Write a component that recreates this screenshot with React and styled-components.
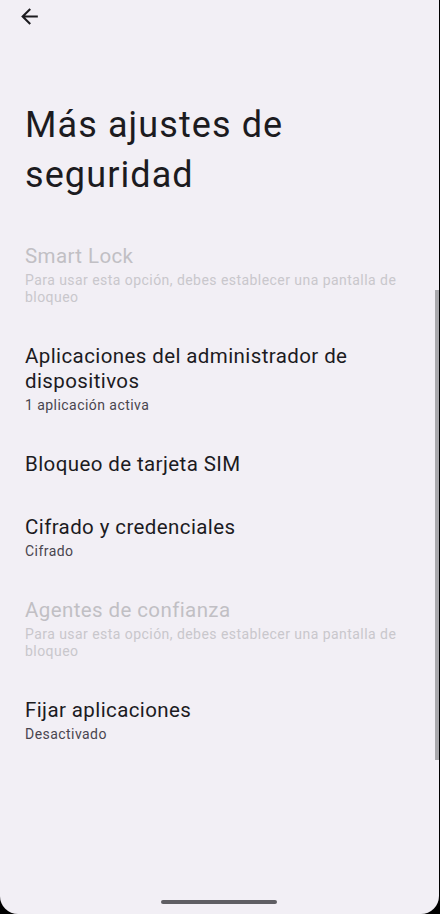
import React from 'react';
import styled, { createGlobalStyle } from 'styled-components';

const GlobalStyle = createGlobalStyle`
  html, body {
    margin: 0;
    padding: 0;
    background: #000;
  }
  body {
    font-family: Roboto, "Noto Sans", sans-serif;
  }
`

const items = [
  {
    title: "Smart Lock",
    summary: "Para usar esta opción, debes establecer una pantalla de bloqueo",
    disabled: true
  },
  {
    title: "Aplicaciones del administrador de dispositivos",
    summary: "1 aplicación activa"
  },
  { title: "Bloqueo de tarjeta SIM" },
  { title: "Cifrado y credenciales", summary: "Cifrado" },
  {
    title: "Agentes de confianza",
    summary: "Para usar esta opción, debes establecer una pantalla de bloqueo",
    disabled: true
  },
  { title: "Fijar aplicaciones", summary: "Desactivado" }
];

const Screen = styled.div`
  position: relative;
  width: 439px;
  height: 914px;
  background: #f2eff5;
  border-radius: 0 0 18px 18px;
  overflow: hidden;
  display: flex;
  flex-direction: column;
`

const Toolbar = styled.div`
  display: flex;
  align-items: center;
  height: 32px;
  padding-left: 17px;
`

const BackButton = styled.button`
  display: flex;
  padding: 0;
  border: none;
  background: none;
  color: #1c1b1f;
  cursor: pointer;
`

const Title = styled.h1`
  margin: 68px 0 0;
  padding: 0 25px;
  font-size: 36px;
  line-height: 50px;
  font-weight: 400;
  letter-spacing: 1.1px;
  color: #1c1b1f;
`

const List = styled.div`
  display: flex;
  flex-direction: column;
  padding-top: 25px;
  padding-right: 10px;
`

const Item = styled.div`
  display: flex;
  flex-direction: column;
  padding: 19px 25px;
  cursor: ${props => props.disabled ? "default" : "pointer"};
`

const ItemTitle = styled.div`
  font-size: 20.5px;
  line-height: 25px;
  letter-spacing: 0.4px;
  color: ${props => props.disabled ? "#c1bfc4" : "#1c1b1f"};
`

const Summary = styled.div`
  margin-top: 3px;
  font-size: 14px;
  line-height: 17px;
  letter-spacing: 0.45px;
  color: ${props => props.disabled ? "#c9c7cc" : "#49454f"};
`

const Scrollbar = styled.div`
  position: absolute;
  right: 0;
  top: 290px;
  width: 4px;
  height: 470px;
  background: #a9a8ac;
`

const HomeBar = styled.div`
  position: absolute;
  left: 161px;
  bottom: 10px;
  width: 116px;
  height: 4px;
  border-radius: 2px;
  background: #5f5e63;
`

const ArrowBack = () => (
  <svg width="25" height="25" viewBox="0 0 24 24" fill="currentColor">
    <path d="M20 11H7.83l5.59-5.59L12 4l-8 8 8 8 1.41-1.41L7.83 13H20v-2z" />
  </svg>
)

const App = () => {
  return (
    <>
      <GlobalStyle />
      <Screen>
        <Toolbar>
          <BackButton aria-label="Atrás">
            <ArrowBack />
          </BackButton>
        </Toolbar>
        <Title>Más ajustes de seguridad</Title>
        <List>
          {items.map(item => (
            <Item key={item.title} disabled={item.disabled}>
              <ItemTitle disabled={item.disabled}>{item.title}</ItemTitle>
              {item.summary && (
                <Summary disabled={item.disabled}>{item.summary}</Summary>
              )}
            </Item>
          ))}
        </List>
        <Scrollbar />
        <HomeBar />
      </Screen>
    </>
  )
}

export default App;
